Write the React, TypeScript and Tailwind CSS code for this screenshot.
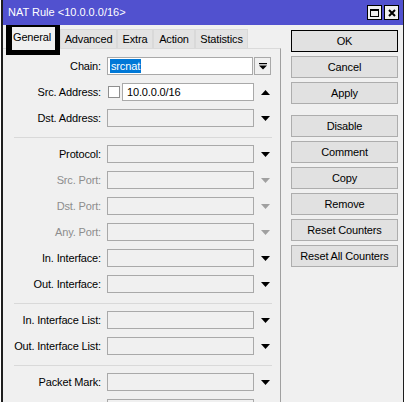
import React from 'react';

type Row = {
  label: string;
  kind?: 'chain' | 'src' | 'plain';
  muted?: boolean;
  arrow?: 'up' | 'down';
};

const groups: Row[][] = [
  [
    { label: 'Chain:', kind: 'chain' },
    { label: 'Src. Address:', kind: 'src', arrow: 'up' },
    { label: 'Dst. Address:', arrow: 'down' },
  ],
  [
    { label: 'Protocol:', arrow: 'down' },
    { label: 'Src. Port:', arrow: 'down', muted: true },
    { label: 'Dst. Port:', arrow: 'down', muted: true },
    { label: 'Any. Port:', arrow: 'down', muted: true },
    { label: 'In. Interface:', arrow: 'down' },
    { label: 'Out. Interface:', arrow: 'down' },
  ],
  [
    { label: 'In. Interface List:', arrow: 'down' },
    { label: 'Out. Interface List:', arrow: 'down' },
  ],
  [
    { label: 'Packet Mark:', arrow: 'down' },
    // next row only peeks in at the bottom edge
    { label: '', arrow: 'down' },
  ],
];

const buttons = [
  ['OK', 'Cancel', 'Apply'],
  ['Disable', 'Comment', 'Copy', 'Remove', 'Reset Counters', 'Reset All Counters'],
];

function Arrow({ dir, muted }: { dir: 'up' | 'down'; muted?: boolean }) {
  return (
    <div className="ml-px flex h-[18px] w-[20px] items-center justify-center">
      <svg width="9" height="5" viewBox="0 0 9 5">
        <path d={dir === 'up' ? 'M0 5H9L4.5 0Z' : 'M0 0H9L4.5 5Z'} fill={muted ? '#a0a0a0' : '#000'} />
      </svg>
    </div>
  );
}

function FormRow({ row }: { row: Row }) {
  return (
    <div className="flex h-[18px] items-center">
      <div className={`w-[98px] shrink-0 whitespace-nowrap text-right ${row.muted ? 'text-[#8d8d8d]' : 'text-black'}`}>
        {row.label}
      </div>
      {row.kind === 'chain' ? (
        <>
          <div className="ml-[6px] flex h-[18px] w-[146px] items-center border border-[#a9a9a9] bg-white px-[2px]">
            <span className="bg-[#0078d7] px-px leading-[14px] text-white">srcnat</span>
          </div>
          <div className="ml-px flex h-[18px] w-[17px] items-center justify-center border border-[#a9a9a9] bg-[#f0f0f0]">
            <svg width="8" height="7" viewBox="0 0 8 7">
              <rect x="0" y="0" width="8" height="1.2" fill="#000" />
              <path d="M0 2.5H8L4 6.5Z" fill="#000" />
            </svg>
          </div>
        </>
      ) : row.kind === 'src' ? (
        <>
          <div className="ml-[7px] h-[12px] w-[12px] shrink-0 border border-[#8f8f8f] bg-white" />
          <div className="ml-[2px] flex h-[18px] w-[132px] items-center border border-[#a9a9a9] bg-white pl-[4px] text-black">
            10.0.0.0/16
          </div>
          <Arrow dir="up" />
        </>
      ) : (
        <>
          <div className="ml-[6px] h-[18px] w-[147px] border border-[#a9a9a9] bg-[#f0f0f0]" />
          <Arrow dir={row.arrow ?? 'down'} muted={row.muted} />
        </>
      )}
    </div>
  );
}

export default function App() {
  return (
    <div
      className="flex h-[402px] w-[406px] overflow-hidden bg-white text-[11px] tracking-[-0.15px]"
      style={{ fontFamily: '"Liberation Sans", Arial, sans-serif' }}
    >
      <div className="ml-px flex h-[402px] w-[403px] shrink-0 flex-col border-l-2 border-r border-[#1e1e1e] bg-[#f0f0f0]">
        {/* title bar */}
        <div className="flex h-[25px] shrink-0 items-center bg-[#5151cf] pl-[5px] pr-[4px]">
          <span className="flex-1 text-[11px] tracking-normal text-white">NAT Rule &lt;10.0.0.0/16&gt;</span>
          <div className="flex gap-[2px]">
            <div className="flex h-[15px] w-[15px] items-center justify-center border border-black bg-[#f0f0f0]">
              <svg width="9" height="8" viewBox="0 0 9 8">
                <rect x="0.5" y="0.5" width="8" height="7" fill="none" stroke="#000" />
                <rect x="0" y="0" width="9" height="2" fill="#000" />
              </svg>
            </div>
            <div className="flex h-[15px] w-[15px] items-center justify-center border border-black bg-[#f0f0f0]">
              <svg width="8" height="8" viewBox="0 0 8 8">
                <path d="M1 1L7 7M7 1L1 7" stroke="#000" strokeWidth="2" />
              </svg>
            </div>
          </div>
        </div>

        <div className="flex min-h-0 flex-1">
          {/* tabs + panel */}
          <div className="flex w-[278px] shrink-0 flex-col">
            <div className="flex h-[23px] shrink-0 items-start">
              <div className="relative z-10 ml-[3px] h-[30px] w-[54px] shrink-0 border-b-[5px] border-l-[6px] border-r-[5px] border-t-2 border-black bg-[#f0f0f0] pl-px pt-[4px] leading-[13px] text-black">
                General
              </div>
              {[
                ['Advanced', 'w-[57px]'],
                ['Extra', 'w-[36px]'],
                ['Action', 'w-[42px]'],
                ['Statistics', 'w-[53px]'],
              ].map(([t, w]) => (
                <div
                  key={t}
                  className={`${w} mt-[4px] flex h-[19px] shrink-0 items-center justify-center border border-b-0 border-[#d9d9d9] bg-[#e3e3e3] text-black`}
                >
                  {t}
                </div>
              ))}
            </div>
            <div className="flex flex-1 flex-col gap-[8px] border-r border-t border-r-[#a0a0a0] border-t-[#dadada] pt-[8px]">
              {groups.map((g, gi) => (
                <React.Fragment key={gi}>
                  {gi > 0 && <div className="-mb-px ml-[11px] mt-[2px] h-px w-[258px] shrink-0 bg-[#d9d9d9]" />}
                  {g.map((r, ri) => (
                    <FormRow key={`${gi}-${ri}`} row={r} />
                  ))}
                </React.Fragment>
              ))}
            </div>
          </div>

          {/* buttons */}
          <div className="flex flex-col pl-[10px] pt-[5px]">
            {buttons.map((grp, gi) => (
              <div key={gi} className={`flex flex-col gap-[4px] ${gi > 0 ? 'mt-[11px]' : ''}`}>
                {grp.map((b) => (
                  <div
                    key={b}
                    className={`flex h-[22px] w-[107px] items-center justify-center border bg-[#e1e1e1] text-black ${
                      b === 'OK' ? 'border-black' : 'border-[#adadad]'
                    }`}
                  >
                    {b}
                  </div>
                ))}
              </div>
            ))}
          </div>
        </div>
      </div>
    </div>
  );
}
